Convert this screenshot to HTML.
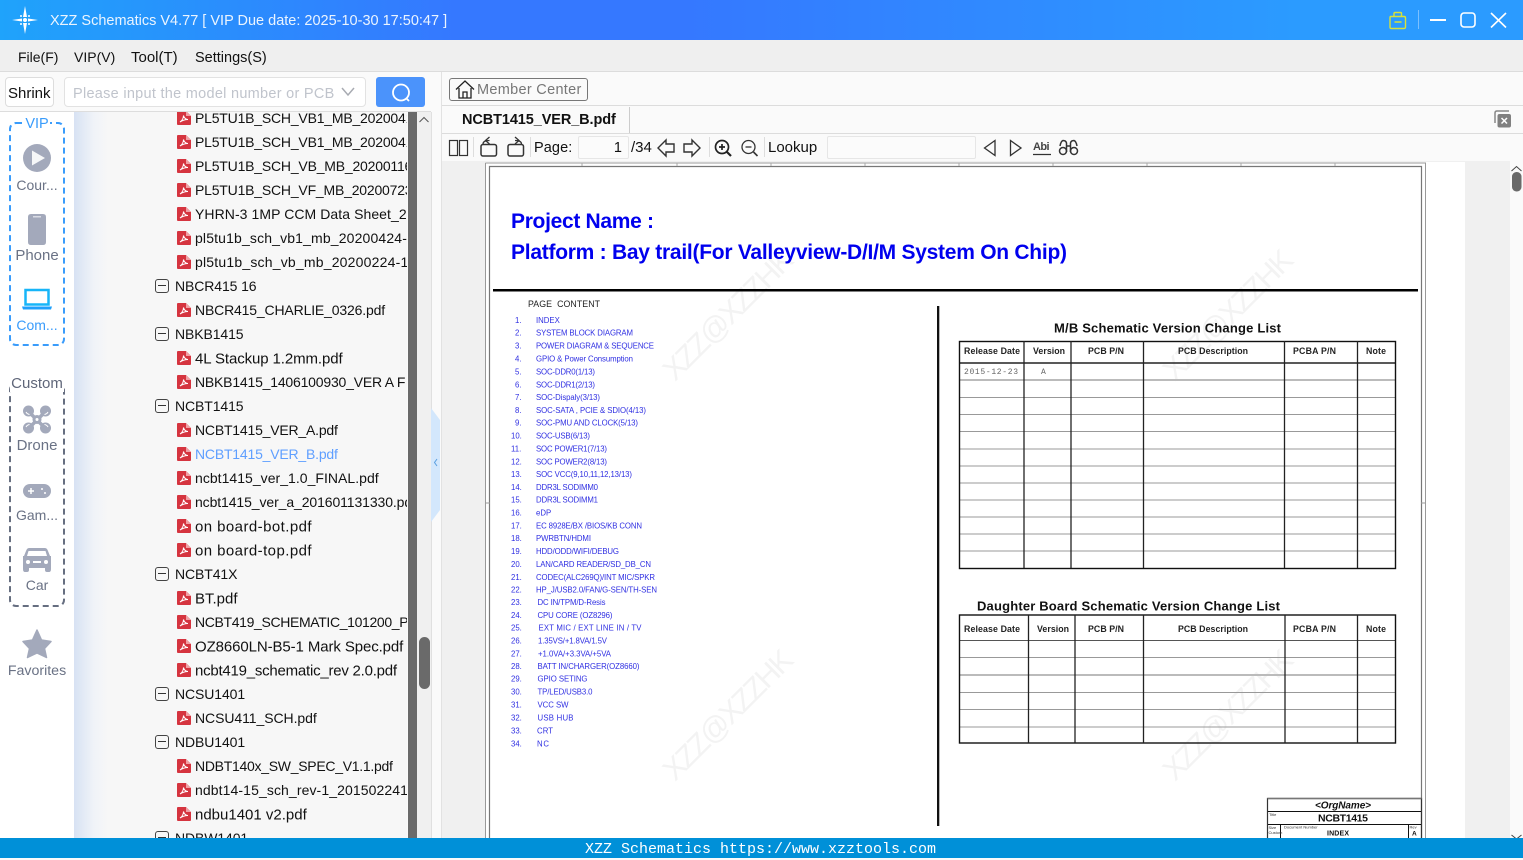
<!DOCTYPE html>
<html lang="en">
<head>
<meta charset="utf-8">
<title>XZZ Schematics</title>
<style>
html,body{margin:0;padding:0;width:1523px;height:858px;overflow:hidden;background:#fafafa;font-family:"Liberation Sans","Noto Sans CJK SC",sans-serif;color:#111}
.a{position:absolute}
.t{position:absolute;white-space:nowrap;line-height:20px;height:20px}
#tree .t{font-size:14px;letter-spacing:-.2px;transform:translateY(-1px)}
#tree .t.b{font-size:15px;transform:translateY(.5px)}
#tree .f{left:121px}
#tree .d{left:101px;letter-spacing:-.1px}
.n{position:absolute;left:0;width:74px;text-align:center;font-size:14px;color:#6a7285;line-height:20px}
.pdf{position:absolute;left:103px;width:14px;height:14px}
.box{position:absolute;left:81px;width:12px;height:12px;border:1px solid #444;border-radius:3px}
.box:after{content:"";position:absolute;left:2px;right:2px;top:5px;height:1px;background:#333}
.sep{position:absolute;width:1px;background:#ddd}
</style>
</head>
<body>
<svg width="0" height="0" style="position:absolute">
<symbol id="p" viewBox="0 0 14 14"><path d="M0 1Q0 0 1 0H9L14 5V13Q14 14 13 14H1Q0 14 0 13Z" fill="#d5343f"/><path d="M9 0V5H14Z" fill="#f0a0a5"/><path d="M3 11C5 10 6.500 7 6.500 4.500C7 7 9 8.500 11 8.500C9 8.500 6 9 3 11Z" fill="none" stroke="#fff" stroke-width="1"/></symbol>
</svg>

<!-- title bar -->
<div class="a" style="left:0;top:0;width:1523px;height:40px;background:linear-gradient(90deg,#1fa3fb 0,#3578ff 30%,#3578ff 45%,#2b9bff 85%,#2b9bff 100%)"></div>
<svg class="a" style="left:12px;top:6px" width="27" height="28" viewBox="0 0 27 28"><path d="M13 0L15 11H11ZM13 28L11 17H15ZM0 14L10 12.500V15.500ZM26 14L16 15.500V12.500Z" fill="#fff"/><circle cx="13" cy="14" r="2" fill="#fff"/><circle cx="9" cy="10" r="1" fill="#fff"/><circle cx="17" cy="10" r="1" fill="#fff"/><circle cx="9" cy="18" r="1" fill="#fff"/><circle cx="17" cy="18" r="1" fill="#fff"/></svg>
<div class="t" style="left:50px;top:11px;font-size:14.5px;color:#eaf4ff;letter-spacing:0">XZZ Schematics V4.77 [ VIP Due date: 2025-10-30 17:50:47 ]</div>
<svg class="a" style="left:1385px;top:8px" width="130" height="24" viewBox="0 0 130 24" fill="none">
<path d="M5.500 8.500H19Q20.500 8.500 20.500 10V19Q20.500 20.500 19 20.500H6Q5 20.500 5 19V10Q5 8.500 5.500 8.500ZM9 8V5.500Q9 4.500 10 4.500H15.500Q16.500 4.500 16.500 5.500V8M9.500 14H16.500" stroke="#d8e23a" stroke-width="1.400"/>
<path d="M33.500 2V21" stroke="#7cc0ff"/>
<path d="M45 12H61" stroke="#fff" stroke-width="2"/>
<rect x="76" y="5" width="14" height="14" rx="3" stroke="#fff" stroke-width="1.600"/>
<path d="M106 5L121 19.500M121 5L106 19.500" stroke="#fff" stroke-width="1.600"/>
</svg>

<!-- menu -->
<div class="a" style="left:0;top:40px;width:1523px;height:31px;background:#efefef;border-bottom:1px solid #dcdcdc"></div>
<div class="t" style="left:18px;top:47px;font-size:14px">File(F)</div>
<div class="t" style="left:74px;top:47px;font-size:14px">VIP(V)</div>
<div class="t" style="left:131px;top:48px;font-size:15px">Tool(T)</div>
<div class="t" style="left:195px;top:48px;font-size:14.500px">Settings(S)</div>

<!-- left toolbar -->
<div class="a" style="left:0;top:72px;width:431px;height:39px;background:#fafafa;border-bottom:1px solid #ddd"></div>
<div class="a" style="left:5px;top:77px;width:47px;height:28px;border:1px solid #ddd;border-radius:4px;background:#fff"></div>
<div class="t" style="left:8px;top:84px;font-size:15px">Shrink</div>
<div class="a" style="left:64px;top:77px;width:300px;height:28px;border:1px solid #e2e2e2;border-radius:4px;background:#fff"></div>
<div class="t" style="left:73px;top:84px;font-size:14.500px;color:#c0c4cc;letter-spacing:.28px">Please input the model number or PCB</div>
<svg class="a" style="left:340px;top:86px" width="16" height="12" viewBox="0 0 16 12" fill="none"><path d="M2 2L8 9L14 2" stroke="#a8abb2" stroke-width="1.500"/></svg>
<div class="a" style="left:376px;top:77px;width:49px;height:30px;background:#4b93fb;border-radius:3px"></div>
<svg class="a" style="left:389px;top:81px" width="24" height="24" viewBox="0 0 24 24" fill="none"><circle cx="12" cy="11.500" r="8" stroke="#fff" stroke-width="1.800"/><path d="M17 17L20 20" stroke="#fff" stroke-width="1.800"/></svg>

<!-- side nav -->
<div class="a" style="left:0;top:112px;width:74px;height:726px;background:#fff"></div>
<div class="a" style="left:9px;top:122px;width:52px;height:220px;border:2px dashed #3a9cfb;border-radius:7px"></div>
<div class="n" style="top:113px;color:#3a9cfb;width:74px"><span style="background:#fff;padding:0 1px;font-size:14.500px">VIP</span></div>
<div class="a" style="left:9px;top:383px;width:52px;height:220px;border:2px dashed #666e80;border-radius:7px"></div>
<div class="n" style="top:373px"><span style="background:#fff;padding:0 1px;color:#5f6679;font-size:15px">Custom</span></div>
<svg class="a" style="left:0;top:112px" width="74" height="560" viewBox="0 112 74 560" fill="#a3a9bb">
<circle cx="37" cy="158" r="14"/><path d="M32 150.500L45 158L32 165.500Z" fill="#fff" opacity=".9"/>
<path d="M31 214H43Q46 214 46 217V242Q46 245 43 245H31Q28 245 28 242V217Q28 214 31 214Z"/><rect x="33" y="216" width="8" height="1.500" fill="#fff" opacity=".6"/>
<path d="M25.500 290H48.500V304.500H25.500Z" fill="none" stroke="#17b5f8" stroke-width="2.500"/><path d="M22 306.500H52L51 309.500H23Z" fill="#1fa0fc"/>
<path d="M30 413L44 427M44 413L30 427" stroke="#a3a9bb" stroke-width="3.500"/>
<circle cx="28.500" cy="411" r="5.500"/><circle cx="45.500" cy="411" r="5.500"/><circle cx="28.500" cy="428" r="5.500"/><circle cx="45.500" cy="428" r="5.500"/>
<path d="M26 412Q27 414 29.500 414.500M48 412Q47 414 44.500 414.500M26 427Q27 425 29.500 424.500M48 427Q47 425 44.500 424.500" stroke="#fff" fill="none"/>
<circle cx="37" cy="419.500" r="4.500"/><circle cx="37" cy="419.500" r="1.500" fill="#fff"/>
<rect x="23" y="484" width="28" height="14" rx="7"/><path d="M28 491H34M31 488V494" stroke="#fff" stroke-width="1.500"/><circle cx="42" cy="489" r="1" fill="#fff"/><circle cx="45" cy="493" r="1" fill="#fff"/>
<path d="M29 548H45Q47 548 48 551L50 556H51V569Q51 572 49 572H47Q45 572 45 570V568H29V570Q29 572 27 572H25Q23 572 23 569V556H24L26 551Q27 548 29 548ZM28.500 551L27 556H47L45.500 551Z" fill-rule="evenodd"/><circle cx="28" cy="562" r="2" fill="#fff"/><circle cx="46" cy="562" r="2" fill="#fff"/><rect x="33" y="561" width="8" height="2" fill="#fff"/>
<path d="M37 630L41.500 640L51 641.500L44.500 648.500L46.500 657.500L37 653L27.500 657.500L29.500 648.500L23 641.500L32.500 640Z" stroke="#a3a9bb" stroke-width="1.500" stroke-linejoin="round"/>
</svg>
<div class="n" style="top:175px">Cour...</div>
<div class="n" style="top:246px;font-size:15px">Phone</div>
<div class="n" style="top:315px;color:#3a9cfb">Com...</div>
<div class="n" style="top:436px;font-size:15px">Drone</div>
<div class="n" style="top:505px">Gam...</div>
<div class="n" style="top:575px">Car</div>
<div class="n" style="top:661px;font-size:14.200px">Favorites</div>

<!-- tree -->
<div id="tree" class="a" style="left:74px;top:112px;width:333px;height:726px;overflow:hidden;background:linear-gradient(90deg,#d7e2f3 0,#f0f3f8 20px,#f7f7f7 34px,#f7f7f7 100%)">
<svg class="pdf" style="top:-1px"><use href="#p"/></svg><div class="t f" style="top:-3px">PL5TU1B_SCH_VB1_MB_20200417</div>
<svg class="pdf" style="top:23px"><use href="#p"/></svg><div class="t f" style="top:21px">PL5TU1B_SCH_VB1_MB_20200417</div>
<svg class="pdf" style="top:47px"><use href="#p"/></svg><div class="t f" style="top:45px">PL5TU1B_SCH_VB_MB_20200116</div>
<svg class="pdf" style="top:71px"><use href="#p"/></svg><div class="t f" style="top:69px">PL5TU1B_SCH_VF_MB_20200723</div>
<svg class="pdf" style="top:95px"><use href="#p"/></svg><div class="t f" style="top:93px;letter-spacing:.07px">YHRN-3 1MP CCM Data Sheet_20</div>
<svg class="pdf" style="top:119px"><use href="#p"/></svg><div class="t f" style="top:117px;letter-spacing:.15px">pl5tu1b_sch_vb1_mb_20200424-1</div>
<svg class="pdf" style="top:143px"><use href="#p"/></svg><div class="t f" style="top:141px;letter-spacing:.2px">pl5tu1b_sch_vb_mb_20200224-1</div>
<div class="box" style="top:167px"></div><div class="t d" style="top:165px">NBCR415 16</div>
<svg class="pdf" style="top:191px"><use href="#p"/></svg><div class="t f" style="top:189px;letter-spacing:-.16px">NBCR415_CHARLIE_0326.pdf</div>
<div class="box" style="top:215px"></div><div class="t d" style="top:213px">NBKB1415</div>
<svg class="pdf" style="top:239px"><use href="#p"/></svg><div class="t f b" style="top:237px;letter-spacing:-.1px">4L Stackup 1.2mm.pdf</div>
<svg class="pdf" style="top:263px"><use href="#p"/></svg><div class="t f" style="top:261px">NBKB1415_1406100930_VER A F</div>
<div class="box" style="top:287px"></div><div class="t d" style="top:285px">NCBT1415</div>
<svg class="pdf" style="top:311px"><use href="#p"/></svg><div class="t f" style="top:309px">NCBT1415_VER_A.pdf</div>
<svg class="pdf" style="top:335px"><use href="#p"/></svg><div class="t f" style="top:333px;color:#5f9fff">NCBT1415_VER_B.pdf</div>
<svg class="pdf" style="top:359px"><use href="#p"/></svg><div class="t f" style="top:357px;letter-spacing:.03px">ncbt1415_ver_1.0_FINAL.pdf</div>
<svg class="pdf" style="top:383px"><use href="#p"/></svg><div class="t f" style="top:381px;letter-spacing:-.1px">ncbt1415_ver_a_201601131330.pdf</div>
<svg class="pdf" style="top:407px"><use href="#p"/></svg><div class="t f b" style="top:405px;letter-spacing:.43px">on board-bot.pdf</div>
<svg class="pdf" style="top:431px"><use href="#p"/></svg><div class="t f b" style="top:429px;letter-spacing:.43px">on board-top.pdf</div>
<div class="box" style="top:455px"></div><div class="t d" style="top:453px">NCBT41X</div>
<svg class="pdf" style="top:479px"><use href="#p"/></svg><div class="t f b" style="top:477px;letter-spacing:0">BT.pdf</div>
<svg class="pdf" style="top:503px"><use href="#p"/></svg><div class="t f" style="top:501px;letter-spacing:-.35px">NCBT419_SCHEMATIC_101200_P</div>
<svg class="pdf" style="top:527px"><use href="#p"/></svg><div class="t f b" style="top:525px;letter-spacing:-.1px">OZ8660LN-B5-1 Mark Spec.pdf</div>
<svg class="pdf" style="top:551px"><use href="#p"/></svg><div class="t f b" style="top:549px;letter-spacing:-.23px">ncbt419_schematic_rev 2.0.pdf</div>
<div class="box" style="top:575px"></div><div class="t d" style="top:573px">NCSU1401</div>
<svg class="pdf" style="top:599px"><use href="#p"/></svg><div class="t f" style="top:597px;letter-spacing:-.07px">NCSU411_SCH.pdf</div>
<div class="box" style="top:623px"></div><div class="t d" style="top:621px">NDBU1401</div>
<svg class="pdf" style="top:647px"><use href="#p"/></svg><div class="t f" style="top:645px;letter-spacing:-.28px">NDBT140x_SW_SPEC_V1.1.pdf</div>
<svg class="pdf" style="top:671px"><use href="#p"/></svg><div class="t f" style="top:669px;letter-spacing:.1px">ndbt14-15_sch_rev-1_201502241</div>
<svg class="pdf" style="top:695px"><use href="#p"/></svg><div class="t f b" style="top:693px;letter-spacing:0">ndbu1401 v2.pdf</div>
<div class="box" style="top:719px"></div><div class="t d" style="top:717px">NDBW1401</div>
</div>
<div class="a" style="left:408px;top:112px;width:9px;height:726px;background:#6a6a6a"></div>
<div class="a" style="left:417px;top:112px;width:14px;height:726px;background:#f0f0f0;border-right:1px solid #e0e0e0"></div>
<svg class="a" style="left:418px;top:115px" width="12" height="10" viewBox="0 0 12 10" fill="none"><path d="M1.500 7L6 2.500L10.500 7" stroke="#555"/></svg>
<div class="a" style="left:419px;top:637px;width:11px;height:52px;border-radius:6px;background:#6a6a6a"></div>

<!-- splitter -->
<div class="a" style="left:432px;top:72px;width:9px;height:766px;background:#fafafa"></div>
<svg class="a" style="left:431px;top:408px" width="10" height="114" viewBox="0 0 10 114"><path d="M0 0L9 12V102L0 114Z" fill="#d3e7fc"/><path d="M6 51L3.500 54.500L6 58" stroke="#5a9fe0" fill="none"/></svg>
<div class="a" style="left:441px;top:72px;width:1px;height:766px;background:#e2e2e2"></div>

<!-- right top rows -->
<div class="a" style="left:442px;top:72px;width:1081px;height:33px;background:#fafafa;border-bottom:1px solid #dcdcdc"></div>
<div class="a" style="left:442px;top:106px;width:1081px;height:27px;background:#fafafa;border-bottom:1px solid #dcdcdc"></div>
<div class="a" style="left:442px;top:134px;width:1081px;height:27px;background:#fafafa"></div>

<div class="a" style="left:449px;top:78px;width:137px;height:21px;border:1px solid #777;border-radius:3px"></div>
<svg class="a" style="left:455px;top:80px" width="20" height="19" viewBox="0 0 20 19" fill="none" stroke="#222" stroke-width="1.300"><path d="M1 9.500L10 1L19 9.500M4 8V18H16V8M8 18V12H12V18"/></svg>
<div class="t" style="left:477px;top:80px;font-size:14.500px;color:#777;letter-spacing:.3px">Member Center</div>

<div class="t" style="left:462px;top:110px;font-size:14.500px;font-weight:bold;color:#111;letter-spacing:-.1px">NCBT1415_VER_B.pdf</div>
<div class="sep" style="left:629px;top:107px;height:26px;background:#ccc"></div>
<svg class="a" style="left:1493px;top:110px" width="20" height="19" viewBox="0 0 20 19"><path d="M2 13V3Q2 1 4 1H16" stroke="#888" stroke-width="1.500" fill="none"/><rect x="4.500" y="4" width="13.500" height="13.500" rx="2" fill="#808080"/><path d="M8.500 8L14 13.500M14 8L8.500 13.500" stroke="#fff" stroke-width="1.500"/></svg>

<!-- pdf toolbar -->
<svg class="a" style="left:442px;top:134px" width="650" height="27" viewBox="442 134 650 27" fill="none" stroke="#333" stroke-width="1.200">
<rect x="449.500" y="140.500" width="8" height="15"/><rect x="459.500" y="140.500" width="8" height="15"/>
<path d="M473.500 137V157" stroke="#ddd" stroke-width="1"/>
<rect x="481" y="144.500" width="15.500" height="11.500" rx="2" stroke-width="1.500"/><path d="M483 144Q483 140.500 489.500 140.500M489.500 137L485.500 140.500L489.500 144" stroke-width="1.300"/>
<rect x="508" y="144.500" width="15.500" height="11.500" rx="2" stroke-width="1.500"/><path d="M521.500 144Q521.500 140.500 515 140.500M515 137L519 140.500L515 144" stroke-width="1.300"/>
<path d="M530.500 137V157" stroke="#ddd" stroke-width="1"/>
<path d="M666 140L658 148L666 156V152H674V144H666Z" stroke-width="1.400"/>
<path d="M692 140L700 148L692 156V152H684V144H692Z" stroke-width="1.400"/>
<path d="M709.500 137V157" stroke="#ddd" stroke-width="1"/>
<circle cx="722" cy="147" r="6.500" stroke-width="1.700" stroke="#222"/><path d="M727 152L731 156" stroke-width="2.200" stroke="#222"/><path d="M719 147H725M722 144V150" stroke-width="1.700" stroke="#222"/>
<circle cx="748.500" cy="147" r="6.500" stroke-width="1.300"/><path d="M753.500 152L757.500 156" stroke-width="1.600"/><path d="M745.500 147H751.500" stroke-width="1.300"/>
<path d="M764.500 137V157" stroke="#ddd" stroke-width="1"/>
<path d="M995 140.500L984.500 148L995 155.500Z" stroke-width="1.300"/>
<path d="M1010.500 140.500L1021 148L1010.500 155.500Z" stroke-width="1.300"/>
<path d="M1033 154.500H1051" stroke-width="1.200"/>
<path d="M1060 146Q1061 141 1063 140.500Q1066 140.500 1066.500 143V152M1077 146Q1076 141 1074 140.500Q1071 140.500 1070.500 143V152M1066.500 146H1070.500" stroke-width="1.500"/><circle cx="1063" cy="151" r="3.500" stroke-width="1.500"/><circle cx="1074" cy="151" r="3.500" stroke-width="1.500"/>
</svg>
<div class="t" style="left:1033px;top:140px;width:18px;font-size:11px;color:#444;font-weight:bold;letter-spacing:-.6px;line-height:15px;height:15px">Abi</div>
<div class="t" style="left:534px;top:138px;font-size:14.500px;letter-spacing:.1px">Page:</div>
<div class="a" style="left:578px;top:136px;width:49px;height:21px;background:#fbfbfb;border:1px solid #e6e6e6;border-radius:2px"></div>
<div class="t" style="left:578px;top:138px;width:44px;text-align:right;font-size:14.500px">1</div>
<div class="t" style="left:631px;top:138px;font-size:15px">/34</div>
<div class="t" style="left:768px;top:138px;font-size:15px">Lookup</div>
<div class="a" style="left:827px;top:136px;width:147px;height:21px;background:#fbfbfb;border:1px solid #e6e6e6;border-radius:2px"></div>

<!-- pdf area -->
<div class="a" style="left:442px;top:161px;width:1023px;height:677px;background:#f0f0f0"></div>
<div class="a" style="left:1465px;top:161px;width:45px;height:677px;background:#f0f0f0"></div>
<div class="a" style="left:1510px;top:161px;width:13px;height:677px;background:#fafafa"></div>
<svg class="a" style="left:0;top:0" width="1523" height="838" viewBox="0 0 1523 838" font-family="'Liberation Sans',Arial,sans-serif">
<rect x="486" y="162" width="979" height="676" fill="#fff"/>
<path d="M485.500 163H1425.500V838M485.500 163V838" fill="none" stroke="#999"/>
<path d="M489.500 838V166.500H1421.500V838" fill="none" stroke="#777" stroke-width="1.200"/>
<path d="M486 503H490M1425 503H1421" stroke="#999"/>
<path d="M582 163V166M677 163V166M771 163V166M865 163V166M959 163V166M1053 163V166M1147 163V166M1241 163V166M1335 163V166" stroke="#aaa"/>

<!-- watermarks -->
<g font-size="30" fill="#f3f3f3">
<text transform="translate(675,382) rotate(-45)" textLength="170">XZZ@XZZHK</text>
<text transform="translate(1175,382) rotate(-45)" textLength="170">XZZ@XZZHK</text>
<text transform="translate(675,782) rotate(-45)" textLength="170">XZZ@XZZHK</text>
<text transform="translate(1175,782) rotate(-45)" textLength="170">XZZ@XZZHK</text>
</g>

<g fill="#0000ee" font-weight="bold" font-size="21">
<text x="511" y="228" textLength="143">Project Name :</text>
<text x="511" y="259" textLength="556">Platform : Bay trail(For Valleyview-D/I/M System On Chip)</text>
</g>
<rect x="493" y="289" width="925" height="2.500" fill="#000"/>
<rect x="937" y="306" width="2.300" height="520" fill="#111"/>
<text x="528" y="307" font-size="8.800" fill="#222" textLength="72">PAGE&#160;&#160;CONTENT</text>

<g font-size="7.800" fill="#2f2fe2" transform="translate(0,-.5)">
<text x="515" y="323.500">1.</text><text x="536" y="323.500">INDEX</text>
<text x="515" y="336">2.</text><text x="536" y="336" textLength="97">SYSTEM BLOCK DIAGRAM</text>
<text x="515" y="349">3.</text><text x="536" y="349" textLength="118">POWER DIAGRAM &amp; SEQUENCE</text>
<text x="515" y="362">4.</text><text x="536" y="362" textLength="97">GPIO &amp; Power Consumption</text>
<text x="515" y="375">5.</text><text x="536" y="375" textLength="59">SOC-DDR0(1/13)</text>
<text x="515" y="388">6.</text><text x="536" y="388" textLength="59">SOC-DDR1(2/13)</text>
<text x="515" y="400.500">7.</text><text x="536" y="400.500" textLength="64">SOC-Dispaly(3/13)</text>
<text x="515" y="413.500">8.</text><text x="536" y="413.500" textLength="110">SOC-SATA , PCIE &amp; SDIO(4/13)</text>
<text x="515" y="426">9.</text><text x="536" y="426" textLength="102">SOC-PMU AND CLOCK(5/13)</text>
<text x="511" y="439">10.</text><text x="536" y="439" textLength="54">SOC-USB(6/13)</text>
<text x="511" y="452">11.</text><text x="536" y="452" textLength="71">SOC POWER1(7/13)</text>
<text x="511" y="465">12.</text><text x="536" y="465" textLength="71">SOC POWER2(8/13)</text>
<text x="511" y="477.500">13.</text><text x="536" y="477.500" textLength="96">SOC VCC(9,10,11,12,13/13)</text>
<text x="511" y="490.500">14.</text><text x="536" y="490.500" textLength="62">DDR3L SODIMM0</text>
<text x="511" y="503">15.</text><text x="536" y="503" textLength="62">DDR3L SODIMM1</text>
<text x="511" y="516">16.</text><text x="536" y="516">eDP</text>
<text x="511" y="529">17.</text><text x="536" y="529" textLength="106">EC 8928E/BX /BIOS/KB CONN</text>
<text x="511" y="541.500">18.</text><text x="536" y="541.500" textLength="55">PWRBTN/HDMI</text>
<text x="511" y="554.500">19.</text><text x="536" y="554.500" textLength="83">HDD/ODD/WIFI/DEBUG</text>
<text x="511" y="567.500">20.</text><text x="536" y="567.500" textLength="115">LAN/CARD READER/SD_DB_CN</text>
<text x="511" y="580.500">21.</text><text x="536" y="580.500" textLength="119">CODEC(ALC269Q)/INT MIC/SPKR</text>
<text x="511" y="593">22.</text><text x="536" y="593" textLength="121">HP_J/USB2.0/FAN/G-SEN/TH-SEN</text>
<text x="511" y="605.500">23.</text><text x="537.500" y="605.500" textLength="68">DC IN/TPM/D-Resis</text>
<text x="511" y="618.500">24.</text><text x="537.500" y="618.500" textLength="75">CPU CORE (OZ8296)</text>
<text x="511" y="631">25.</text><text x="538.500" y="631" textLength="103">EXT MIC / EXT LINE IN / TV</text>
<text x="511" y="644">26.</text><text x="538" y="644" textLength="69">1.35VS/+1.8VA/1.5V</text>
<text x="511" y="657">27.</text><text x="538" y="657" textLength="73">+1.0VA/+3.3VA/+5VA</text>
<text x="511" y="669.500">28.</text><text x="537.500" y="669.500" textLength="102">BATT IN/CHARGER(OZ8660)</text>
<text x="511" y="682">29.</text><text x="537.500" y="682" textLength="50">GPIO SETING</text>
<text x="511" y="695">30.</text><text x="537.500" y="695" textLength="55">TP/LED/USB3.0</text>
<text x="511" y="708">31.</text><text x="537.500" y="708" textLength="31">VCC SW</text>
<text x="511" y="721">32.</text><text x="537.500" y="721" textLength="36">USB HUB</text>
<text x="511" y="734">33.</text><text x="537" y="734" textLength="16">CRT</text>
<text x="511" y="747">34.</text><text x="537" y="747" textLength="12">NC</text>
</g>

<!-- MB table -->
<text x="1054" y="332.500" font-size="13" font-weight="bold" fill="#111" textLength="227">M/B Schematic Version Change List</text>
<g stroke="#999" stroke-width="1">
<path d="M960 397.500H1395M960 414.500H1395M960 431.500H1395M960 449H1395M960 466H1395M960 483H1395M960 500H1395M960 517H1395M960 534H1395M960 551H1395"/>
</g>
<path d="M960 380H1395" stroke="#bbb" stroke-width="2"/>
<path d="M960 363H1395" stroke="#222" stroke-width="1.400"/>
<rect x="959.500" y="341.500" width="436" height="227" fill="none" stroke="#111" stroke-width="1.400"/>
<path d="M1024 341V568M1071 341V568M1143.500 341V568M1284.500 341V568M1357.500 341V568" stroke="#222" stroke-width="1.300"/>
<g font-size="8.800" font-weight="bold" fill="#222">
<text x="964" y="354" textLength="56">Release Date</text>
<text x="1033" y="354" textLength="32">Version</text>
<text x="1088" y="354" textLength="36">PCB P/N</text>
<text x="1178" y="354" textLength="70">PCB Description</text>
<text x="1293" y="354" textLength="43">PCBA P/N</text>
<text x="1366" y="354" textLength="20">Note</text>
</g>
<text x="964" y="374" font-size="8" fill="#666" font-family="'Liberation Mono',monospace" textLength="54">2015-12-23</text>
<text x="1041" y="374" font-size="8" fill="#666" font-family="'Liberation Mono',monospace">A</text>

<!-- Daughter table -->
<text x="977" y="610.500" font-size="13" font-weight="bold" fill="#111" textLength="303">Daughter Board Schematic Version Change List</text>
<path d="M960 657.500H1395M960 692.500H1395M960 709.500H1395M960 727H1395" stroke="#999"/>
<path d="M960 675H1395" stroke="#bbb" stroke-width="2"/>
<path d="M960 640.500H1395" stroke="#555" stroke-width="1"/>
<rect x="959.500" y="615" width="436" height="128" fill="none" stroke="#111" stroke-width="1.400"/>
<path d="M1028.500 615V743M1075 615V743M1143.500 615V743M1285 615V743M1357.500 615V743" stroke="#222" stroke-width="1.300"/>
<g font-size="8.800" font-weight="bold" fill="#222">
<text x="964" y="632" textLength="56">Release Date</text>
<text x="1037" y="632" textLength="32">Version</text>
<text x="1088" y="632" textLength="36">PCB P/N</text>
<text x="1178" y="632" textLength="70">PCB Description</text>
<text x="1293" y="632" textLength="43">PCBA P/N</text>
<text x="1366" y="632" textLength="20">Note</text>
</g>

<!-- title block -->
<path d="M1267.500 838V798.500H1421.500V838" fill="none" stroke="#333" stroke-width="1.200"/>
<path d="M1267.500 798.500H1421.500" stroke="#777" stroke-width="1.500"/>
<path d="M1268 811.500H1421M1268 824.500H1421M1280.500 824.500V838M1408.500 824.500V838" stroke="#111"/>
<text x="1315" y="808.500" font-size="10" font-weight="bold" font-style="italic" fill="#111" textLength="56">&lt;OrgName&gt;</text>
<text x="1318" y="821.500" font-size="10.500" font-weight="bold" fill="#111" textLength="50">NCBT1415</text>
<text x="1327" y="835.500" font-size="7" font-weight="bold" fill="#111" textLength="22">INDEX</text>
<text x="1269" y="816" font-size="4" fill="#333">Title</text>
<text x="1268.500" y="829" font-size="4" fill="#333">Size</text>
<text x="1268.500" y="834" font-size="4" fill="#333">Custom</text>
<text x="1284" y="828.500" font-size="4" fill="#333">Document Number</text>
<text x="1409.500" y="828.500" font-size="4" fill="#333">Rev</text>
<text x="1412" y="835.500" font-size="6.500" font-weight="bold" fill="#111">A</text>

<path d="M1511.500 171L1516.500 166.500L1521.500 171" stroke="#444" fill="none"/>
<rect x="1512" y="172" width="9.500" height="19.500" rx="4.500" fill="#6a6a6a"/>
<path d="M1511.500 835L1516.500 839L1521.500 835" stroke="#444" fill="none"/>
</svg>

<!-- status bar -->
<div class="a" style="left:0;top:838px;width:1523px;height:20px;background:#0090d8"></div>
<div class="t" style="left:585px;top:840px;font-family:'Liberation Mono',monospace;font-size:15px;color:#fff;line-height:19px">XZZ Schematics https://www.xzztools.com</div>
</body>
</html>
